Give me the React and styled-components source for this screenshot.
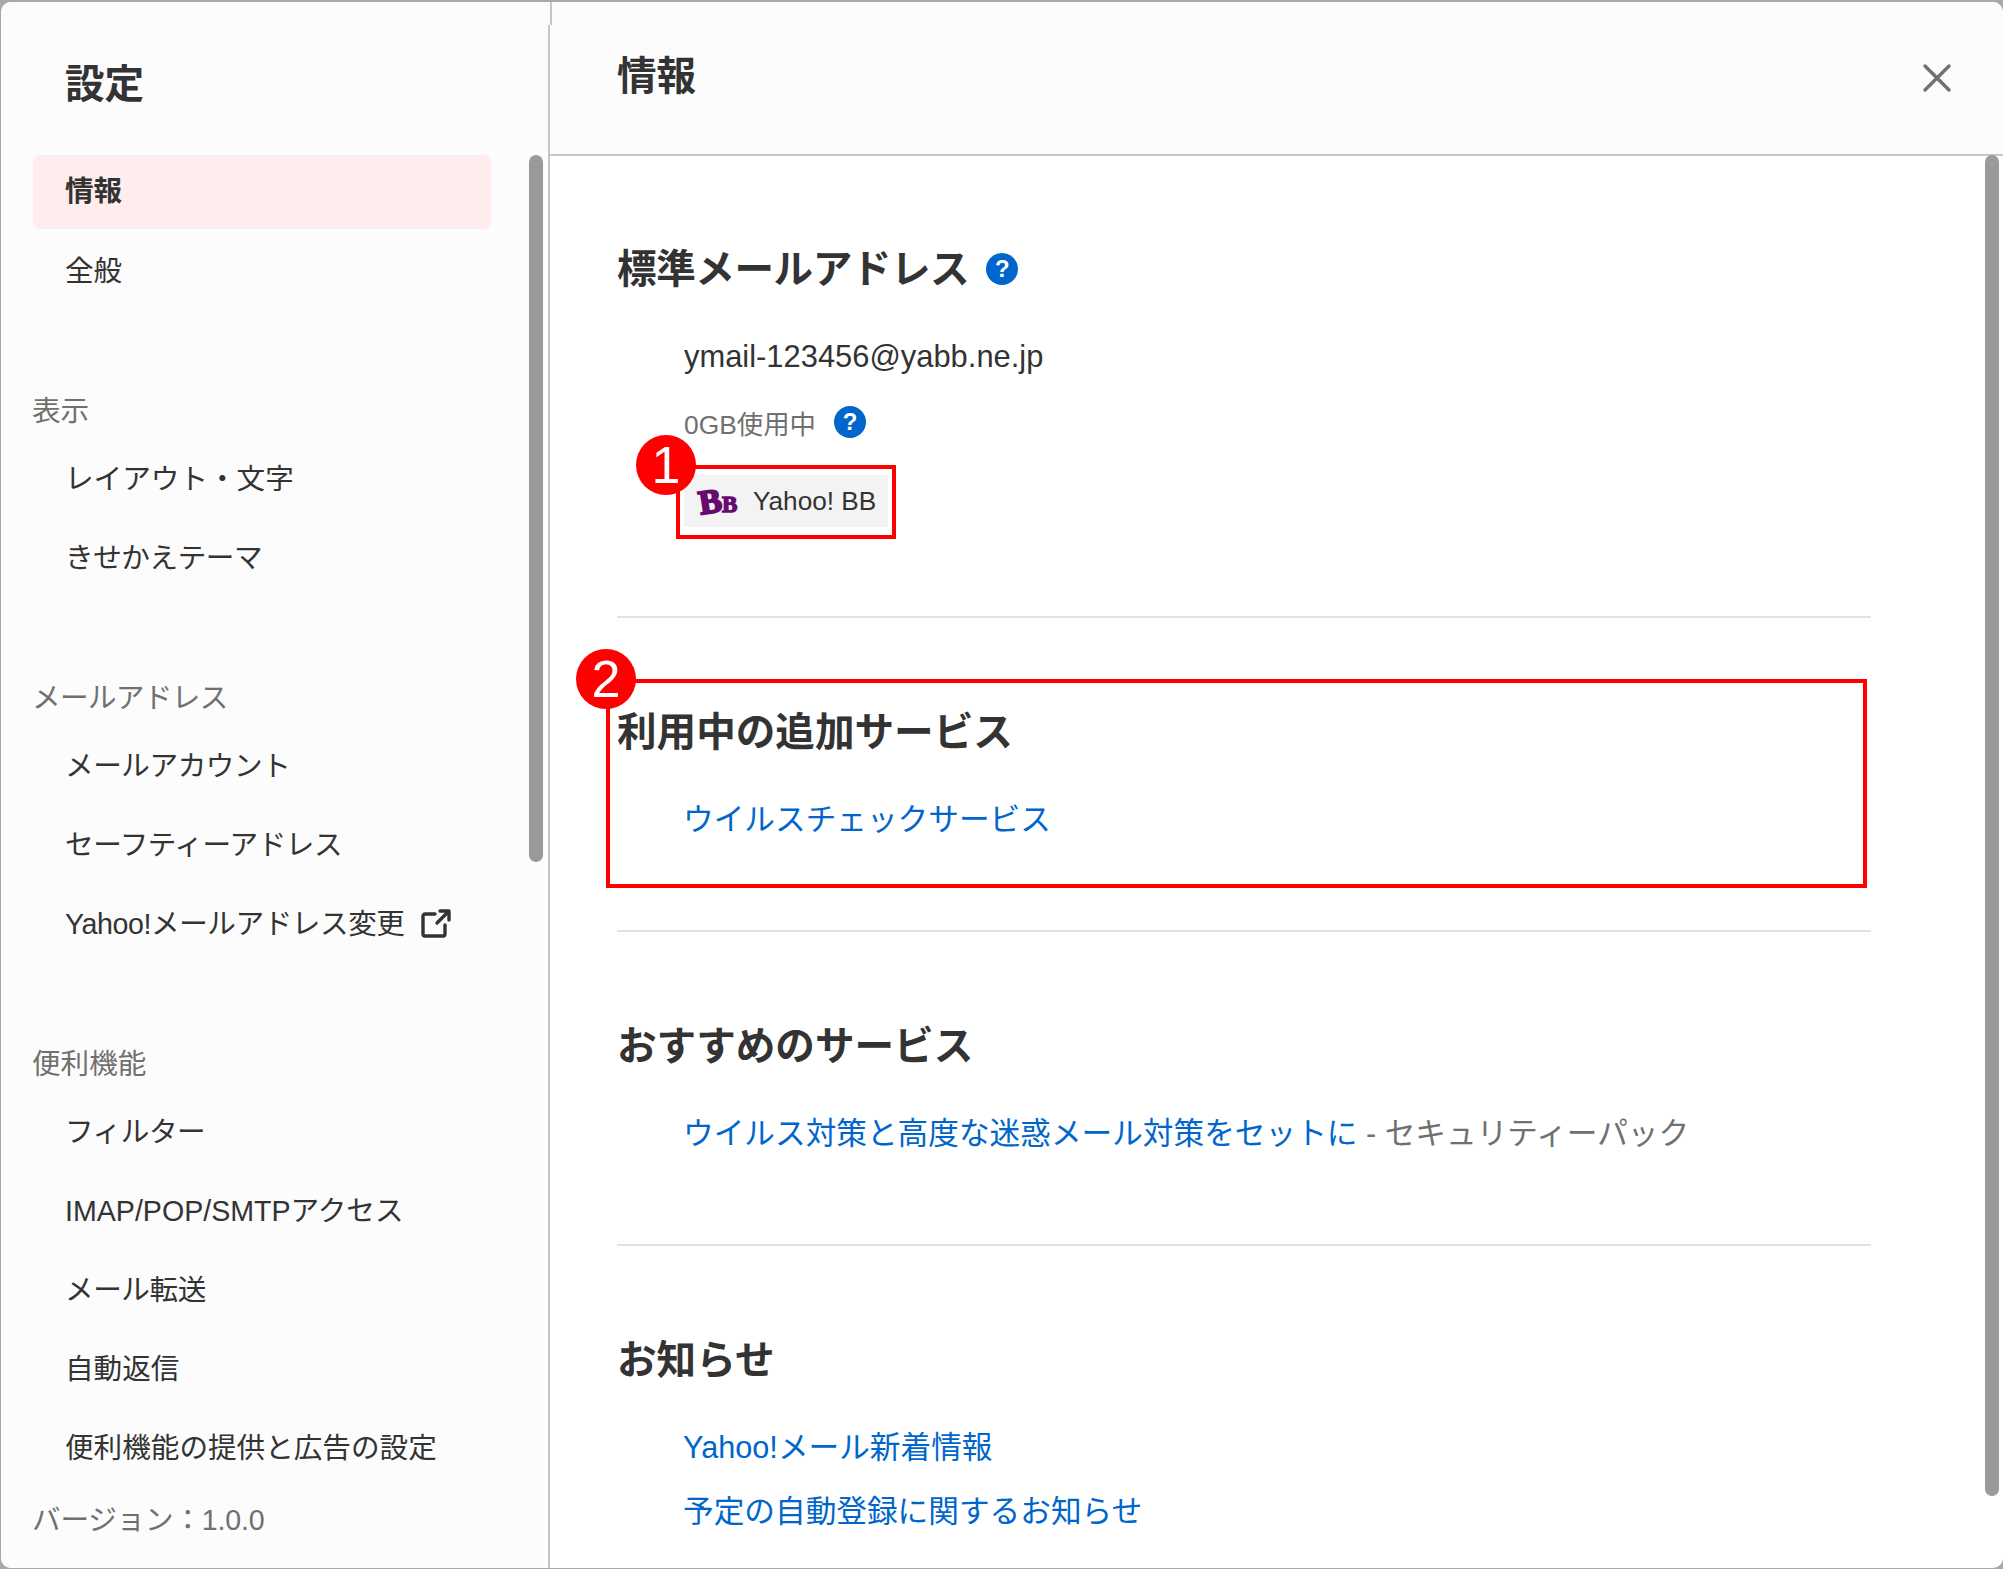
import React from "react";
import styled, { createGlobalStyle } from "styled-components";

const Global = createGlobalStyle`
  html, body { margin: 0; padding: 0; background: #999; }
  body { width: 2003px; height: 1569px; overflow: hidden; font-family: "Liberation Sans", "Noto Sans CJK JP", sans-serif; color: #333; }
  * { box-sizing: border-box; }
`;

const Frame = styled.div`
  position: relative;
  width: 2003px;
  height: 1569px;
  padding: 2px 0 1px 1px;
  background: #a8a8a8;
`;
const Window = styled.div`
  display: flex;
  width: 100%;
  height: 100%;
  background: #fff;
  border-radius: 10px;
  overflow: hidden;
`;
const Sidebar = styled.aside`
  position: relative;
  width: 549px;
  flex: none;
  background: #fcfcfc;
  border-right: 2px solid #c6c6c6;
  padding: 0 0 0 32px;
  &::before {
    content: "";
    position: absolute;
    top: 0;
    right: -2px;
    width: 2px;
    height: 23px;
    background: #fcfcfc;
  }
  &::after {
    content: "";
    position: absolute;
    top: 0;
    right: -4px;
    width: 2px;
    height: 23px;
    background: #c6c6c6;
  }
`;
const SideTitle = styled.h1`
  margin: 0;
  height: 153px;
  padding: 57px 0 0 32px;
  font-size: 39.6px;
  line-height: 50px;
  font-weight: 700;
`;
const NavItem = styled.div`
  display: flex;
  align-items: center;
  gap: 15px;
  width: 458px;
  height: 74px;
  margin-bottom: 5px;
  padding: 0 0 ${(p) => (p.$active ? 8 : 6)}px 32px;
  border-radius: 8px;
  font-size: 28.6px;
  letter-spacing: ${(p) => (p.$tight ? "-0.42px" : "0")};
  font-weight: ${(p) => (p.$active ? 700 : 400)};
  background: ${(p) => (p.$active ? "#ffecec" : "transparent")};
`;
const GroupLabel = styled.div`
  height: 40px;
  margin: 83px 0 11px -1px;
  font-size: 28.6px;
  line-height: 40px;
  letter-spacing: ${(p) => (p.$tight ? "-0.65px" : "0")};
  color: #707070;
`;
const Version = styled.div`
  height: 40px;
  margin: 15px 0 0 -1px;
  font-size: 28.6px;
  line-height: 40px;
  letter-spacing: -0.2px;
  color: #707070;
`;
const Scrollbar = styled.div`
  position: absolute;
  top: ${(p) => p.$top}px;
  left: ${(p) => p.$left}px;
  width: 14px;
  height: ${(p) => p.$height}px;
  border-radius: 7px;
  background: #9a9a9a;
`;
const Main = styled.main`
  flex: 1;
  min-width: 0;
`;
const Header = styled.header`
  display: flex;
  align-items: center;
  justify-content: space-between;
  height: 154px;
  padding: 0 50px 0 67px;
  background: #fcfcfc;
  border-bottom: 2px solid #c6c6c6;
`;
const HeaderTitle = styled.h1`
  margin: 0 0 4px;
  font-size: 39.6px;
  line-height: 50px;
  font-weight: 700;
`;
const Close = styled.svg`
  display: block;
  width: 32px;
  height: 32px;
`;
const Content = styled.div`
  width: 1321px;
  padding-left: 67px;
`;
const Section = styled.section`
  padding: ${(p) => p.$top}px 0 ${(p) => p.$bottom}px;
  border-bottom: ${(p) => (p.$last ? "none" : "2px solid #e2e2e2")};
`;
const SectionTitle = styled.h2`
  display: flex;
  align-items: center;
  gap: 17px;
  margin: 0;
  height: 50px;
  padding-top: 2px;
  font-size: 39.6px;
  line-height: 48px;
  letter-spacing: ${(p) => (p.$tight ? "-0.45px" : "0")};
  font-weight: 700;
`;
const Help = styled.span`
  display: inline-flex;
  align-items: center;
  justify-content: center;
  flex: none;
  width: 32px;
  height: 32px;
  border-radius: 50%;
  background: #0066cc;
  color: #fff;
  font-size: 24px;
  font-weight: 700;
  line-height: 1;
`;
const Email = styled.div`
  height: 40px;
  margin: 44px 0 0 67px;
  font-size: 30.9px;
  line-height: 40px;
`;
const Usage = styled.div`
  display: flex;
  align-items: center;
  gap: 18px;
  height: 40px;
  margin: 25px 0 0 67px;
  font-size: 26.4px;
  color: #707070;
`;
const Badge = styled.div`
  display: flex;
  align-items: center;
  gap: 13px;
  width: 204px;
  height: 52px;
  margin: 33px 0 0 67px;
  padding-left: 14px;
  background: #f3f3f3;
  font-size: 26.2px;
`;
const Row = styled.div`
  height: 40px;
  margin: ${(p) => p.$gap}px 0 0 66px;
  font-size: 30.66px;
  line-height: 40px;
  color: #707070;
  white-space: nowrap;
`;
const Link = styled.a`
  color: #0066cc;
  text-decoration: none;
`;
const Outline = styled.div`
  position: absolute;
  left: ${(p) => p.$x}px;
  top: ${(p) => p.$y}px;
  width: ${(p) => p.$w}px;
  height: ${(p) => p.$h}px;
  border: 4px solid #ff0000;
`;
const Marker = styled.div`
  position: absolute;
  left: ${(p) => p.$x - 30}px;
  top: ${(p) => p.$y - 30}px;
  display: flex;
  align-items: center;
  justify-content: center;
  width: 60px;
  height: 60px;
  border-radius: 50%;
  background: #ff0000;
  color: #fff;
  font-size: 52px;
  line-height: 1;
`;
const ExternalIcon = styled.svg`
  flex: none;
  margin-top: 5px;
`;
const Logo = styled.svg`
  flex: none;
  overflow: visible;
`;

const Item = ({ active, tight, children }) => (
  <NavItem $active={active} $tight={tight}>{children}</NavItem>
);

const External = () => (
  <ExternalIcon width="32" height="32" viewBox="0 0 32 32" fill="none" stroke="#333" strokeWidth="3.4" strokeLinecap="round" strokeLinejoin="round">
    <path d="M15 6H5a2 2 0 0 0-2 2V26a2 2 0 0 0 2 2H23a2 2 0 0 0 2-2V17" />
    <path d="M17 15L28 4" />
    <path d="M20 3H29V12" />
  </ExternalIcon>
);

const BBLogo = () => (
  <Logo width="42" height="44" viewBox="0 0 42 44">
    <text x="1" y="34" transform="rotate(-9 12 24)" fontFamily="Liberation Serif" fontWeight="700" fontSize="34" fill="#660a70" stroke="#660a70" strokeWidth="2">B</text>
    <text x="24" y="33" fontFamily="Liberation Serif" fontWeight="700" fontSize="23" fill="#660a70" stroke="#660a70" strokeWidth="1.4">B</text>
  </Logo>
);

export default function App() {
  return (
    <Frame>
      <Global />
      <Window>
        <Sidebar>
          <SideTitle>設定</SideTitle>
          <Item active>情報</Item>
          <Item>全般</Item>
          <GroupLabel>表示</GroupLabel>
          <Item>レイアウト・文字</Item>
          <Item tight>きせかえテーマ</Item>
          <GroupLabel $tight>メールアドレス</GroupLabel>
          <Item tight>メールアカウント</Item>
          <Item tight>セーフティーアドレス</Item>
          <Item tight>Yahoo!メールアドレス変更<External /></Item>
          <GroupLabel>便利機能</GroupLabel>
          <Item tight>フィルター</Item>
          <Item>IMAP/POP/SMTPアクセス</Item>
          <Item tight>メール転送</Item>
          <Item>自動返信</Item>
          <Item>便利機能の提供と広告の設定</Item>
          <Version>バージョン：1.0.0</Version>
        </Sidebar>
        <Main>
          <Header>
            <HeaderTitle>情報</HeaderTitle>
            <Close viewBox="0 0 32 32" fill="none" stroke="#707070" strokeWidth="3.4" strokeLinecap="round">
              <path d="M4 4L28 28M28 4L4 28" />
            </Close>
          </Header>
          <Content>
            <Section $top={87} $bottom={89}>
              <SectionTitle $tight>標準メールアドレス<Help>?</Help></SectionTitle>
              <Email>ymail-123456@yabb.ne.jp</Email>
              <Usage>0GB使用中<Help>?</Help></Usage>
              <Badge><BBLogo />Yahoo! BB</Badge>
            </Section>
            <Section $top={88} $bottom={91}>
              <SectionTitle>利用中の追加サービス</SectionTitle>
              <Row $gap={43}><Link>ウイルスチェックサービス</Link></Row>
            </Section>
            <Section $top={88} $bottom={91}>
              <SectionTitle>おすすめのサービス</SectionTitle>
              <Row $gap={43}><Link>ウイルス対策と高度な迷惑メール対策をセットに</Link> - セキュリティーパック</Row>
            </Section>
            <Section $top={88} $bottom={0} $last>
              <SectionTitle>お知らせ</SectionTitle>
              <Row $gap={43}><Link>Yahoo!メール新着情報</Link></Row>
              <Row $gap={24}><Link>予定の自動登録に関するお知らせ</Link></Row>
            </Section>
          </Content>
        </Main>
      </Window>
      <Scrollbar $left={529} $top={155} $height={707} />
      <Scrollbar $left={1985} $top={155} $height={1341} />
      <Outline $x={676} $y={465} $w={220} $h={74} />
      <Marker $x={666} $y={465}>1</Marker>
      <Outline $x={606} $y={679} $w={1261} $h={209} />
      <Marker $x={606} $y={679}>2</Marker>
    </Frame>
  );
}
